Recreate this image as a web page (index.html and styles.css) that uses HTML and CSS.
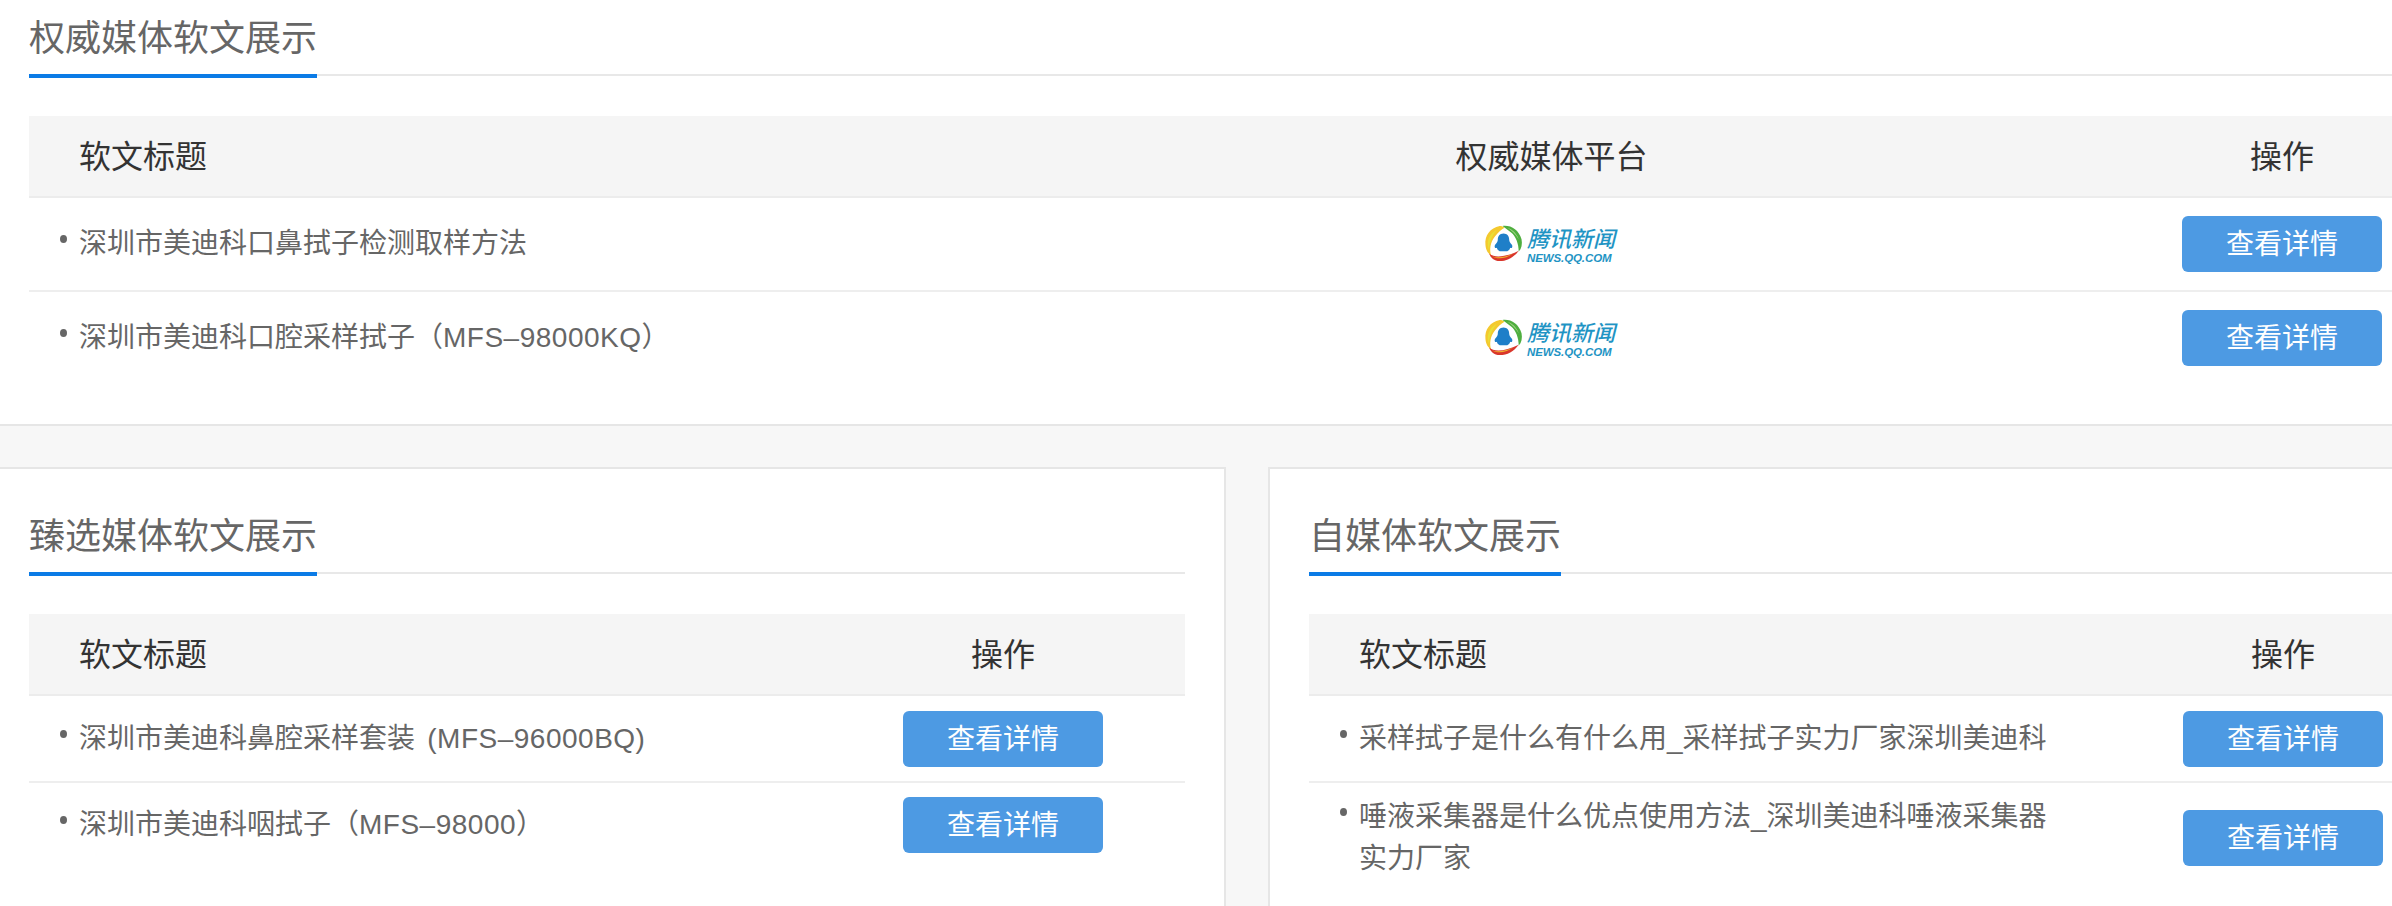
FILE: index.html
```html
<!DOCTYPE html>
<html lang="zh-CN">
<head>
<meta charset="utf-8">
<title>软文展示</title>
<link rel="stylesheet" href="styles.css">
</head>
<body>
<svg class="defs" width="0" height="0" aria-hidden="true">
  <symbol id="qq-ring" viewBox="0 0 40 40">
    <path fill="#f4c92f" d="M16 1C6 3 0 11 1 21c.5 6 3 9 6 11-2-6-1-14 4-20 3-4 7-7 10-9-1-1.500-3-2-5-2z"/>
    <path fill="#e9e037" d="M13 5C7 8 3 14 3.500 21c.2 2 .7 4 1.500 5.500C4.500 20 7 12 13 5z"/>
    <path fill="#4fae3f" d="M19 1c9-1 17 4 20 14 1 5 0 10-3 13 0-8-3-16-8-20-3-2.500-6-5-9-7z"/>
    <path fill="#a8d88a" d="M24 3c5 1.500 10 6 12 12-3-5-7-9-12-12z"/>
    <path fill="#d9362b" d="M5 30c5 5 17 4 31-3-5 7-12 11-20 11-6 0-10-4-11-8z"/>
    <path fill="#efb02e" d="M8 33c5 2 14 1 22-3-6 5-16 7-22 3z"/>
    <path fill="#1f7fc8" d="M20 9c4 0 6 3 6 6.500 0 2 1 3 3 5.500 1 2.500-.5 4-2 3-.5 2-1.500 3-3 3.500h-8c-1.500-.5-2.500-1.500-3-3.500-1.500 1-3-.5-2-3 2-2.500 3-3.500 3-5.500C14 12 16 9 20 9z"/>
  </symbol>
</svg>
<main class="page">
  <section class="card">
    <header class="card-head"><h2 class="card-title">权威媒体软文展示</h2></header>
    <div class="table">
      <div class="row row-head cols-three">
        <div class="cell-title">软文标题</div>
        <div class="cell-center">权威媒体平台</div>
        <div class="cell-center">操作</div>
      </div>
      <div class="row row-tall cols-three">
        <div class="cell-title cell-item">深圳市美迪科口鼻拭子检测取样方法</div>
        <div class="cell-center">
          <div class="logo">
            <svg class="logo-ring"><use href="#qq-ring"/></svg>
            <div class="logo-text"><span class="logo-cn">腾讯新闻</span><span class="logo-en">NEWS.QQ.COM</span></div>
          </div>
        </div>
        <div class="cell-center"><a class="btn">查看详情</a></div>
      </div>
      <div class="row row-tall row-last cols-three">
        <div class="cell-title cell-item">深圳市美迪科口腔采样拭子（<span class="latin">MFS–98000KQ</span>）</div>
        <div class="cell-center">
          <div class="logo">
            <svg class="logo-ring"><use href="#qq-ring"/></svg>
            <div class="logo-text"><span class="logo-cn">腾讯新闻</span><span class="logo-en">NEWS.QQ.COM</span></div>
          </div>
        </div>
        <div class="cell-center"><a class="btn">查看详情</a></div>
      </div>
    </div>
  </section>
  <div class="split">
    <section class="card">
      <header class="card-head"><h2 class="card-title">臻选媒体软文展示</h2></header>
      <div class="table">
        <div class="row row-head cols-two">
          <div class="cell-title">软文标题</div>
          <div class="cell-center">操作</div>
        </div>
        <div class="row cols-two">
          <div class="cell-title cell-item">深圳市美迪科鼻腔采样套装<span class="latin"> (MFS–96000BQ)</span></div>
          <div class="cell-center"><a class="btn">查看详情</a></div>
        </div>
        <div class="row row-last cols-two">
          <div class="cell-title cell-item">深圳市美迪科咽拭子（<span class="latin">MFS–98000</span>）</div>
          <div class="cell-center"><a class="btn">查看详情</a></div>
        </div>
      </div>
    </section>
    <section class="card">
      <header class="card-head"><h2 class="card-title">自媒体软文展示</h2></header>
      <div class="table">
        <div class="row row-head cols-two">
          <div class="cell-title">软文标题</div>
          <div class="cell-center">操作</div>
        </div>
        <div class="row cols-two">
          <div class="cell-title cell-item">采样拭子是什么有什么用_采样拭子实力厂家深圳美迪科</div>
          <div class="cell-center"><a class="btn">查看详情</a></div>
        </div>
        <div class="row row-last cols-two">
          <div class="cell-title cell-item">唾液采集器是什么优点使用方法_深圳美迪科唾液采集器实力厂家</div>
          <div class="cell-center"><a class="btn">查看详情</a></div>
        </div>
      </div>
    </section>
  </div>
</main>
</body>
</html>
```
FILE: styles.css
```css
* { box-sizing: border-box; }
html, body { margin: 0; height: 906px; overflow: hidden; }
body {
  background: #f7f7f7;
  font-family: "Liberation Sans", "Noto Sans CJK SC", sans-serif;
  color: #666;
}
.defs { display: block; height: 0; }
.page {
  width: 2518px;
  margin: -31px 0 0 -12px;
  display: flex;
  flex-direction: column;
  gap: 41px;
}
.split { display: grid; grid-template-columns: 1238px 1238px; gap: 42px; }
.card {
  background: #fff;
  border: 2px solid #e6e6e6;
  padding: 0 39px 40px;
}
.card-head {
  display: flex;
  height: 105px;
  border-bottom: 2px solid #e8e8e8;
  margin-bottom: 40px;
}
.card-title {
  margin: 0 0 -2px;
  padding-top: 38px;
  height: 107px;
  font-size: 36px;
  font-weight: 400;
  line-height: 60px;
  color: #666;
  border-bottom: 4px solid #0b7be6;
}
.row {
  display: grid;
  align-items: center;
  min-height: 87px;
  padding: 13px 0;
  border-bottom: 2px solid #eeeeee;
  font-size: 28px;
  line-height: 42px;
}
.cols-three { grid-template-columns: 975px 1fr 366px; }
.cols-two { grid-template-columns: 1fr 364px; }
.row-head {
  min-height: 82px;
  padding: 2px 0 0;
  background: #f5f5f5;
  border-bottom-color: #ececec;
  font-size: 32px;
  color: #333;
}
.row-tall { min-height: 94px; }
.row-last { border-bottom: 0; min-height: 84px; }
.row-tall.row-last { min-height: 92px; }
.cell-title { padding: 0 40px 0 50px; position: relative; }
.cell-item::before {
  content: "";
  position: absolute;
  left: 31px;
  top: 12px;
  width: 7px;
  height: 8px;
  border-radius: 50%;
  background: #666;
}
.latin { letter-spacing: .5px; word-spacing: 4px; }
.cell-center { display: flex; justify-content: center; align-items: center; }
.btn {
  display: block;
  width: 200px;
  height: 56px;
  border-radius: 6px;
  background: #4d9ae3;
  color: #fff;
  font-size: 28px;
  line-height: 58px;
  text-align: center;
}
.logo { display: flex; align-items: center; gap: 4px; height: 38px; margin-right: 4px; }
.logo-ring { width: 39px; height: 38px; }
.logo-text { display: flex; flex-direction: column; font-style: italic; color: #1f94c4; padding-top: 2px; }
.logo-cn {
  font-size: 22px;
  line-height: 27px;
  font-weight: 500;
}
.logo-en {
  font-size: 11.5px;
  line-height: 11px;
  font-weight: 700;
  letter-spacing: -.1px;
}
```
